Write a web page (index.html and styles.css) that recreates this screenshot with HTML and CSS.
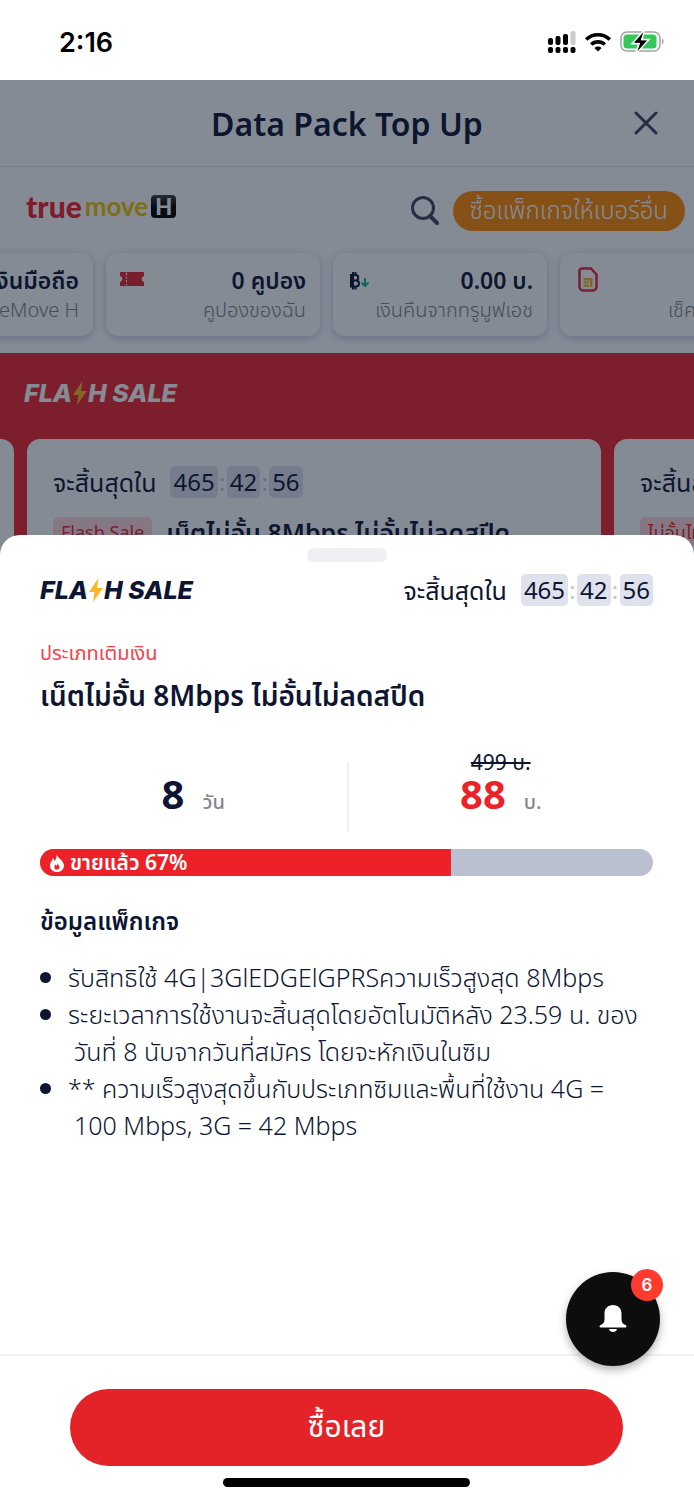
FILE: index.html
```html
<!DOCTYPE html>
<html lang="th">
<head>
  <meta charset="UTF-8" />
  <meta name="viewport" content="width=device-width, initial-scale=1.0"/>
  <title>Data Pack Top Up</title>
  <link rel="stylesheet" href="styles.css">
</head>
<body>

  <!-- Phone status bar -->
  <div class="status-bar">
    <span class="clock">2:16</span>
    <div class="status-icons">
      <svg width="28" height="22" viewBox="0 0 28 22">
        <rect x="0" y="7" width="5" height="7" rx="2"/>
        <rect x="7.500" y="5" width="5" height="9" rx="2"/>
        <rect x="15" y="3" width="5" height="11" rx="2"/>
        <rect x="22.500" y="0" width="5" height="14" rx="2" fill="#ccc"/>
        <rect x="0" y="16" width="5" height="6" rx="2"/>
        <rect x="7.500" y="16" width="5" height="6" rx="2"/>
        <rect x="15" y="16" width="5" height="6" rx="2"/>
        <rect x="22.500" y="16" width="5" height="6" rx="2"/>
      </svg>
      <svg width="28" height="20" viewBox="0 0 28 20" fill="none" stroke="#000" stroke-width="3.600">
        <path d="M2.200 7.500a17 17 0 0 1 23.600 0"/>
        <path d="M7.200 12.500a10 10 0 0 1 13.600 0"/>
        <path d="M14 19.500l-3.600-3.600a5.200 5.200 0 0 1 7.200 0z" fill="#000" stroke="none"/>
      </svg>
      <svg width="45" height="24" viewBox="0 0 45 24">
        <rect x="1" y="2" width="39" height="19" rx="6" fill="#fff" stroke="#a3a3a3" stroke-width="1.500"/>
        <rect x="3.500" y="4.500" width="33" height="14" rx="3.500" fill="#34c759"/>
        <path d="M42 8.500c2 .5 2 5.500 0 6z" fill="#a3a3a3"/>
        <path d="M24 0.500L12.500 13.500h6.500l-3 9.500L28.500 9.800h-6.800z" stroke="#fff" stroke-width="2"/>
        <path d="M23.500 2L14 12.800h6.500l-3 8.500L27 10.500h-6.500z"/>
      </svg>
    </div>
  </div>

  <div class="screen">

    <!-- Page behind the sheet -->
    <div class="page">
      <div class="title-bar">
        <h1>Data Pack Top Up</h1>
        <button class="close-btn" aria-label="Close">
          <svg width="24" height="24" viewBox="0 0 24 24" fill="none" stroke="#3c435c" stroke-width="3" stroke-linecap="round"><path d="M2 2l20 20M22 2L2 22"/></svg>
        </button>
      </div>

      <div class="brand-row">
        <div class="brand"><span class="brand-true">true</span><span class="brand-move">move</span><span class="brand-h">H</span></div>
        <button class="search-btn" aria-label="Search">
          <svg width="28" height="30" viewBox="0 0 28 30" fill="none" stroke="#41485f" stroke-width="3"><circle cx="12" cy="12" r="10.500"/><path d="M19 20l7 7" stroke-width="4" stroke-linecap="round"/></svg>
        </button>
        <button class="other-btn">ซื้อแพ็กเกจให้เบอร์อื่น</button>
      </div>

      <div class="cards">
        <div class="card">
          <div class="card-text"><b>เติมเงินมือถือ</b><span>TrueMove H</span></div>
        </div>
        <div class="card">
          <svg width="24" height="14" viewBox="0 0 24 14" fill="#e5242f"><path d="M0 0h6v1l1-1h17v4c-3 1-3 5 0 6v4H7l-1-1v1H0v-4c3-1 3-5 0-6z"/><path d="M6.500 1v12" stroke="#fff" stroke-dasharray="2 1.500"/></svg>
          <div class="card-text"><b>0 คูปอง</b><span>คูปองของฉัน</span></div>
        </div>
        <div class="card">
          <svg width="24" height="18" viewBox="0 0 24 18" fill="none"><path d="M4 3h4.500a2.700 2.700 0 0 1 0 5.500H4h5a3 3 0 0 1 0 6H4zM6 0v17.500M8.500 0v3M8.500 14.500v3" stroke="#0b1430" stroke-width="2"/><path d="M18 6v8M14.500 10.500L18 14l3.500-3.500" stroke="#1bb08a" stroke-width="2"/></svg>
          <div class="card-text"><b>0.00 บ.</b><span>เงินคืนจากทรูมูฟเอช</span></div>
        </div>
        <div class="card">
          <svg class="sim" width="28" height="25" viewBox="-4 0 28 25" fill="none"><path d="M4 1.500h9l5.500 6V20a3.500 3.500 0 0 1-3.500 3.500H5A3.500 3.500 0 0 1 1.500 20V4A2.500 2.500 0 0 1 4 1.500z" stroke="#e5243c" stroke-width="2.500"/><path d="M5.500 11h9v9h-9z" fill="#f5b324"/><path d="M5.500 14h6M5.500 17h6M11.500 14v6" stroke="#fff"/></svg>
          <div class="card-text"><b>&nbsp;</b><span>เช็คแพ็กเกจ</span></div>
        </div>
      </div>

      <div class="flash">
        <h2 class="flash-logo">FLA<svg width="16" height="24" viewBox="0 0 16 24"><path d="M10.500 0L1 14h5.500L5 24l10-14H9z" fill="#ffb524"/></svg>H SALE</h2>
        <div class="flash-list">
          <div class="flash-card"></div>
          <div class="flash-card">
            <div class="countdown"><span>จะสิ้นสุดใน</span><div class="timer"><b>465</b><i>:</i><b>42</b><i>:</i><b>56</b></div></div>
            <div class="flash-name"><span class="tag">Flash Sale</span><strong>เน็ตไม่อั้น 8Mbps ไม่อั้นไม่ลดสปีด</strong></div>
          </div>
          <div class="flash-card">
            <div class="countdown"><span>จะสิ้นสุดใน</span></div>
            <div class="flash-name"><span class="tag">ไม่อั้นไม่ลดสปีด</span></div>
          </div>
        </div>
      </div>
    </div>

    <div class="overlay"></div>

    <!-- Package detail sheet -->
    <div class="sheet">
      <div class="handle"></div>
      <div class="sheet-body">
        <div class="sheet-head">
          <h2 class="flash-logo">FLA<svg width="16" height="24" viewBox="0 0 16 24"><path d="M10.500 0L1 14h5.500L5 24l10-14H9z" fill="#ffb524"/></svg>H SALE</h2>
          <div class="countdown"><span>จะสิ้นสุดใน</span><div class="timer"><b>465</b><i>:</i><b>42</b><i>:</i><b>56</b></div></div>
        </div>

        <p class="type">ประเภทเติมเงิน</p>
        <h3 class="name">เน็ตไม่อั้น 8Mbps ไม่อั้นไม่ลดสปีด</h3>

        <div class="plan">
          <div class="plan-col">
            <div class="amount"><b>8</b><span>วัน</span></div>
          </div>
          <div class="plan-col price">
            <s>499 บ.</s>
            <div class="amount"><b>88</b><span>บ.</span></div>
          </div>
        </div>

        <div class="progress">
          <div class="progress-fill" style="width: 67%">
            <svg width="14" height="18" viewBox="0 0 14 18" fill="#fff"><path d="M6.500 0c.6 3.500 6.800 6 7.400 11 .4 4-2.700 7-6.900 7s-7.200-3-7-6.700C.2 8 2.500 6.500 3 4c1 1 1.300 2 1.200 3.300C6 5.500 7 3 6.500 0z"/><path d="M7.500 9c.5 2 2.200 2.500 2 4.300A2.500 2.500 0 0 1 7 15.500a2.600 2.600 0 0 1-2.600-2.600c0-1 .5-1.500.8-2.300.6.500 1 .9 1.100 1.500.8-.8 1.300-1.900 1.200-3.100z" fill="#ed2228"/></svg>
            <span>ขายแล้ว 67%</span>
          </div>
        </div>

        <h4 class="info-title">ข้อมูลแพ็กเกจ</h4>
        <ul class="info">
          <li>รับสิทธิใช้ 4G|3GlEDGElGPRSความเร็วสูงสุด 8Mbps</li>
          <li>ระยะเวลาการใช้งานจะสิ้นสุดโดยอัตโนมัติหลัง 23.59 น. ของ<br>วันที่ 8 นับจากวันที่สมัคร โดยจะหักเงินในซิม</li>
          <li>** ความเร็วสูงสุดขึ้นกับประเภทซิมและพื้นที่ใช้งาน 4G =<br>100 Mbps, 3G = 42 Mbps</li>
        </ul>
      </div>

      <div class="sheet-foot">
        <button class="bell-btn" aria-label="Notifications">
          <svg width="28" height="28" viewBox="0 0 28 28" fill="#fff"><path d="M14 0c5 0 8.500 3.500 8.500 8.500v6c0 3 1.500 4.500 4 5.500 1.500.6 1.200 2.500-.2 2.500H1.700C.3 22.500 0 20.600 1.500 20c2.500-1 4-2.500 4-5.500v-6C5.500 3.500 9 0 14 0z"/><path d="M10 24h8c-.5 4-7.500 4-8 0z"/></svg>
          <span class="badge">6</span>
        </button>
        <button class="buy-btn">ซื้อเลย</button>
        <div class="home-bar"></div>
      </div>
    </div>
  </div>

</body>
</html>
```
FILE: styles.css
```css
* { box-sizing: border-box; }
body {
  margin: 0;
  min-height: 100vh;
  display: flex;
  flex-direction: column;
  background-color: #fff;
  color: #0d1533;
  font-family: 'Noto Sans', 'Noto Sans Thai', sans-serif;
}

h1, h2, h3, h4, p, ul { margin: 0; padding: 0; }
svg { display: block; flex: none; }

button {
  border: none;
  background: none;
  padding: 0;
  font-family: inherit;
  cursor: pointer;
}

.status-bar {
  display: flex;
  align-items: center;
  justify-content: space-between;
  height: 80px;
  padding: 4px 29px 0 59px;
}

.clock {
  font-family: Inter, sans-serif;
  font-size: 27px;
  font-weight: 600;
  color: #000;
}

.status-icons {
  display: flex;
  align-items: center;
  gap: 8px;
}

/* The page, the dim layer and the sheet share one grid cell */
.screen {
  flex: 1;
  display: grid;
  overflow: hidden;
}

.page, .overlay, .sheet {
  grid-area: 1 / 1;
  min-width: 0;
}

.page { overflow: hidden; }
.overlay { background-color: rgba(12, 23, 44, 0.5); }

.title-bar {
  display: grid;
  grid-template-columns: 60px 1fr 60px;
  align-items: center;
  height: 87px;
  padding: 0 18px;
  border-bottom: 1px solid #dfe1e8;
}

.title-bar h1 {
  grid-column: 2;
  text-align: center;
  font-size: 32px;
  font-weight: 600;
}

.close-btn { justify-self: center; }

.brand-row {
  display: flex;
  align-items: center;
  height: 86px;
  padding: 2px 9px 0 26px;
}

.brand {
  display: flex;
  align-items: center;
  margin-right: auto;
  padding-bottom: 10px;
  font-family: Lato, sans-serif;
  font-size: 30px;
  line-height: 28px;
}

.brand-true { font-weight: 900; color: #f0202c; }
.brand-move { font-size: 26px; font-weight: 700; color: #f2c200; margin-left: 3px; }

.brand-h {
  width: 25px;
  height: 23px;
  margin-left: 3px;
  border-radius: 4px;
  background: linear-gradient(#444, #000 50%);
  color: #fff;
  font-size: 22px;
  font-weight: 900;
  line-height: 23px;
  text-align: center;
}

.other-btn {
  height: 40px;
  margin-left: 14px;
  padding: 0 17px;
  border-radius: 20px;
  background-color: #ff8a00;
  color: #fff;
  font-size: 24px;
  font-weight: 300;
}

.cards {
  display: flex;
  gap: 13px;
  margin-left: -121px;
  padding-bottom: 17px;
}

.card {
  flex: none;
  display: flex;
  justify-content: space-between;
  width: 214px;
  height: 83px;
  padding: 11px 14px;
  border-radius: 12px;
  box-shadow: 0 2px 8px rgba(40, 60, 130, 0.3);
}

.card svg { margin-top: 8px; }
.card .sim { margin-top: 3px; }

.card-text {
  flex: 1;
  display: flex;
  flex-direction: column;
  align-items: flex-end;
  white-space: nowrap;
  font-size: 20px;
  line-height: 28px;
}

.card-text b { font-size: 23px; font-weight: 600; line-height: 32px; }
.card-text span { font-weight: 300; color: #7d7f88; }

.flash {
  height: 400px;
  background-color: #ec252a;
}

.flash-logo {
  display: flex;
  align-items: center;
  white-space: pre;
  font-family: Inter, sans-serif;
  font-size: 25px;
  font-style: italic;
  font-weight: 800;
  line-height: 30px;
}

.flash > .flash-logo {
  padding: 25px 24px 31px;
  color: #fff;
}

.flash-list {
  display: flex;
  gap: 13px;
  margin-left: -560px;
}

.flash-card {
  flex: none;
  width: 574px;
  height: 260px;
  padding: 24px 26px;
  border-radius: 13px;
  background-color: #fff;
}

.flash-name {
  display: flex;
  align-items: center;
  gap: 14px;
  min-height: 36px;
  margin-top: 14px;
  font-size: 25px;
  line-height: 36px;
}

.flash-name strong { font-weight: 600; }

.tag {
  padding: 0 8px;
  border-radius: 6px;
  background-color: #ffd9dd;
  color: #ed2228;
  font-size: 18px;
  line-height: 30px;
}

.countdown {
  display: flex;
  align-items: center;
  gap: 14px;
  font-size: 25px;
  line-height: 36px;
}

.timer {
  display: flex;
  align-items: center;
  font-size: 24px;
}

.timer b {
  padding: 0 3px;
  border-radius: 5px;
  background-color: #dfe2ec;
  font-weight: 400;
  line-height: 32px;
}

.timer i {
  width: 9px;
  color: #c4c7d0;
  font-style: normal;
  line-height: 32px;
  text-align: center;
}

.flash-card .countdown { margin: 1px 0; }

/* Bottom sheet */
.sheet {
  position: relative;
  align-self: end;
  border-radius: 20px 20px 0 0;
  background-color: #fff;
}

.handle {
  width: 80px;
  height: 14px;
  margin: 13px auto 0;
  border-radius: 7px;
  background-color: #eff0f3;
}

.sheet-body { padding: 10px 41px 210px 40px; }

.sheet-head {
  display: flex;
  align-items: center;
  justify-content: space-between;
}

.type {
  margin-top: 29px;
  color: #f5424b;
  font-size: 20px;
  line-height: 32px;
}

.name {
  margin-top: 6px;
  font-size: 28px;
  font-weight: 600;
  line-height: 40px;
}

.plan {
  display: grid;
  grid-template-columns: 1fr 1fr;
  margin-top: 47px;
}

.plan-col {
  display: flex;
  flex-direction: column;
  align-items: center;
  justify-content: flex-end;
  height: 70px;
  padding-bottom: 11px;
}

.price { border-left: 2px solid #eff0f3; }
.price .amount b { color: #ed2228; }

.plan s {
  font-size: 21px;
  line-height: 26px;
}

.amount {
  display: flex;
  align-items: baseline;
  gap: 18px;
  line-height: 38px;
}

.amount b { font-size: 40px; }
.amount span { color: #85878f; font-size: 20px; font-weight: 500; }

.progress {
  height: 27px;
  margin-top: 17px;
  border-radius: 14px;
  background-color: #bbc0d1;
  overflow: hidden;
}

.progress-fill {
  display: flex;
  align-items: center;
  gap: 6px;
  height: 100%;
  padding-left: 10px;
  background-color: #ed2228;
  color: #fff;
  font-size: 21px;
  font-weight: 600;
  line-height: 27px;
}

.info-title {
  margin-top: 27px;
  font-size: 24px;
  font-weight: 600;
  line-height: 36px;
}

.info {
  margin-top: 20px;
  list-style: none;
  font-size: 25px;
  font-weight: 300;
  line-height: 37px;
}

.info li {
  position: relative;
  padding-left: 34px;
  text-indent: -6px;
}

.info li::before {
  content: '';
  position: absolute;
  left: 0;
  top: 13px;
  width: 11px;
  height: 11px;
  border-radius: 50%;
  background-color: #0d1533;
}

.sheet-foot {
  position: relative;
  padding: 33px 71px 13px 70px;
  border-top: 2px solid #f0f1f4;
}

.buy-btn {
  display: block;
  width: 100%;
  height: 77px;
  border-radius: 39px;
  background-color: #e42328;
  color: #fff;
  font-size: 30px;
}

.home-bar {
  width: 247px;
  height: 9px;
  margin: 12px auto 0;
  border-radius: 5px;
  background-color: #000;
}

.bell-btn {
  position: absolute;
  right: 34px;
  top: -84px;
  display: flex;
  align-items: center;
  justify-content: center;
  width: 94px;
  height: 94px;
  border-radius: 50%;
  background-color: #0d0d0d;
  box-shadow: 0 4px 8px rgba(0, 0, 0, 0.3);
}

.badge {
  position: absolute;
  top: -3px;
  right: -3px;
  width: 32px;
  height: 32px;
  border-radius: 50%;
  background-color: #ff3b30;
  color: #fff;
  font-family: Inter, sans-serif;
  font-size: 17px;
  font-weight: 600;
  line-height: 32px;
}
```
